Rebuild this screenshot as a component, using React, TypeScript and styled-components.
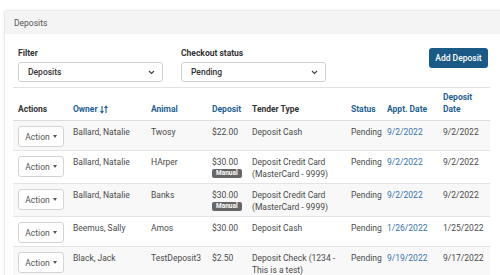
import React from "react";
import styled, { createGlobalStyle } from "styled-components";

const GlobalStyle = createGlobalStyle`
  html, body {
    margin: 0;
    padding: 0;
    background: #fff;
  }
  body {
    font-family: Roboto, "Liberation Sans", Arial, sans-serif;
    font-size: 8.5px;
    color: #4a4a4a;
    overflow: hidden;
  }
`;

const Page = styled.div`
  padding: 10px 0 0 4px;
  width: 500px;
  height: 275px;
  box-sizing: border-box;
  overflow: hidden;
`;

const Card = styled.section`
  width: 505px;
  border: 1px solid #e9e9e9;
  border-right: none;
  border-radius: 3px 0 0 0;
  box-shadow: 0 0 3px rgba(0, 0, 0, 0.06);
  background: #fff;
`;

const CardHeader = styled.header`
  height: 23px;
  display: flex;
  align-items: center;
  padding-left: 9px;
  background: #f4f4f4;
  color: #555;
`;

const CardBody = styled.div`
  padding: 0 20px 0 8px;
`;

const Filters = styled.div`
  display: flex;
  align-items: flex-start;
  gap: 18px;
  padding: 13px 2px 5px 5px;
  border-bottom: 1px solid #e2e2e2;
`;

const Field = styled.label`
  display: flex;
  flex-direction: column;
  gap: 3px;
`;

const Label = styled.span`
  font-weight: 700;
  color: #333;
  line-height: 12px;
`;

const SelectBox = styled.div<{ $w: number }>`
  width: ${(p) => p.$w}px;
  height: 20px;
  box-sizing: border-box;
  border: 1px solid #cfcfcf;
  border-radius: 3px;
  display: flex;
  align-items: center;
  justify-content: space-between;
  padding: 0 7px 0 9px;
  color: #333;
  font-weight: 500;
`;

const PrimaryButton = styled.button`
  margin-left: auto;
  margin-top: 1px;
  width: 59px;
  height: 20px;
  border: none;
  border-radius: 3px;
  background: #1b5a86;
  color: #fff;
  font-family: inherit;
  font-size: 8.5px;
  font-weight: 500;
  padding: 0;
`;

const Table = styled.table`
  width: 477px;
  table-layout: fixed;
  border-collapse: collapse;
`;

const Th = styled.th<{ $blue?: boolean }>`
  text-align: left;
  vertical-align: bottom;
  padding: 3px 5px 5px;
  line-height: 12px;
  font-weight: 700;
  color: ${(p) => (p.$blue ? "#1f5f93" : "#333")};
  border-bottom: 1px solid #dcdcdc;
`;

const Row = styled.tr<{ $striped: boolean }>`
  background: ${(p) => (p.$striped ? "#f8f8f8" : "#fff")};
  border-bottom: 1px solid #e4e4e4;
`;

const Td = styled.td<{ $blue?: boolean }>`
  vertical-align: top;
  padding: 5px 5px 3px;
  line-height: 12px;
  color: ${(p) => (p.$blue ? "#3574ad" : "#4a4a4a")};
`;

const ActionButton = styled.button`
  width: 46px;
  height: 21px;
  border: 1px solid #d4d4d4;
  border-radius: 3px;
  background: #fff;
  color: #555;
  font-family: inherit;
  font-size: 8.5px;
  padding: 0;
  display: flex;
  align-items: center;
  justify-content: center;
  gap: 3px;
`;

const Caret = styled.span`
  width: 0;
  height: 0;
  border-left: 2.5px solid transparent;
  border-right: 2.5px solid transparent;
  border-top: 3px solid #555;
`;

const BadgeLine = styled.div`
  line-height: 10px;
  padding-top: 1px;
`;

const Badge = styled.span`
  display: inline-block;
  padding: 0 4px;
  height: 9px;
  line-height: 9px;
  border-radius: 2px;
  background: #666;
  color: #fff;
  font-size: 6.5px;
  font-weight: 700;
  vertical-align: top;
`;

const HeadWithIcon = styled.span`
  display: inline-flex;
  align-items: center;
  gap: 2px;
`;

const Chevron = () => (
  <svg width="7" height="5" viewBox="0 0 7 5" fill="none">
    <path d="M1 1l2.5 2.5L6 1" stroke="#444" strokeWidth="1.2" />
  </svg>
);

const SortIcon = () => (
  <svg width="8" height="9" viewBox="0 0 8 9" fill="none" stroke="#1f5f93" strokeWidth="1.1">
    <path d="M2 1v6.5M0.5 6l1.5 1.8L3.5 6" />
    <path d="M6 8V1.5M4.5 3L6 1.2 7.5 3" />
  </svg>
);

type Deposit = {
  owner: string;
  animal: string;
  amount: string;
  manual?: boolean;
  tender: string;
  status: string;
  appt: string;
  date: string;
};

const deposits: Deposit[] = [
  { owner: "Ballard, Natalie", animal: "Twosy", amount: "$22.00", tender: "Deposit Cash", status: "Pending", appt: "9/2/2022", date: "9/2/2022" },
  { owner: "Ballard, Natalie", animal: "HArper", amount: "$30.00", manual: true, tender: "Deposit Credit Card (MasterCard - 9999)", status: "Pending", appt: "9/2/2022", date: "9/2/2022" },
  { owner: "Ballard, Natalie", animal: "Banks", amount: "$30.00", manual: true, tender: "Deposit Credit Card (MasterCard - 9999)", status: "Pending", appt: "9/2/2022", date: "9/2/2022" },
  { owner: "Beemus, Sally", animal: "Amos", amount: "$30.00", tender: "Deposit Cash", status: "Pending", appt: "1/26/2022", date: "1/25/2022" },
  { owner: "Black, Jack", animal: "TestDeposit3", amount: "$2.50", tender: "Deposit Check (1234 - This is a test)", status: "Pending", appt: "9/19/2022", date: "9/17/2022" },
];

const widths = [55, 78, 61, 40, 99, 36, 56, 52];

export default function App() {
  return (
    <Page>
      <GlobalStyle />
      <Card>
        <CardHeader>Deposits</CardHeader>
        <CardBody>
          <Filters>
            <Field>
              <Label>Filter</Label>
              <SelectBox $w={145}>
                Deposits
                <Chevron />
              </SelectBox>
            </Field>
            <Field>
              <Label>Checkout status</Label>
              <SelectBox $w={145}>
                Pending
                <Chevron />
              </SelectBox>
            </Field>
            <PrimaryButton>Add Deposit</PrimaryButton>
          </Filters>
          <Table>
            <colgroup>
              {widths.map((w, i) => (
                <col key={i} style={{ width: w }} />
              ))}
            </colgroup>
            <thead>
              <tr>
                <Th>Actions</Th>
                <Th $blue>
                  <HeadWithIcon>
                    Owner <SortIcon />
                  </HeadWithIcon>
                </Th>
                <Th $blue>Animal</Th>
                <Th $blue>Deposit</Th>
                <Th>Tender Type</Th>
                <Th $blue>Status</Th>
                <Th $blue>Appt. Date</Th>
                <Th $blue>Deposit Date</Th>
              </tr>
            </thead>
            <tbody>
              {deposits.map((d, i) => (
                <Row key={i} $striped={i % 2 === 0}>
                  <Td>
                    <ActionButton>
                      Action <Caret />
                    </ActionButton>
                  </Td>
                  <Td>{d.owner}</Td>
                  <Td>{d.animal}</Td>
                  <Td>
                    {d.amount}
                    {d.manual && (
                      <BadgeLine>
                        <Badge>Manual</Badge>
                      </BadgeLine>
                    )}
                  </Td>
                  <Td>{d.tender}</Td>
                  <Td>{d.status}</Td>
                  <Td $blue>{d.appt}</Td>
                  <Td>{d.date}</Td>
                </Row>
              ))}
            </tbody>
          </Table>
        </CardBody>
      </Card>
    </Page>
  );
}
